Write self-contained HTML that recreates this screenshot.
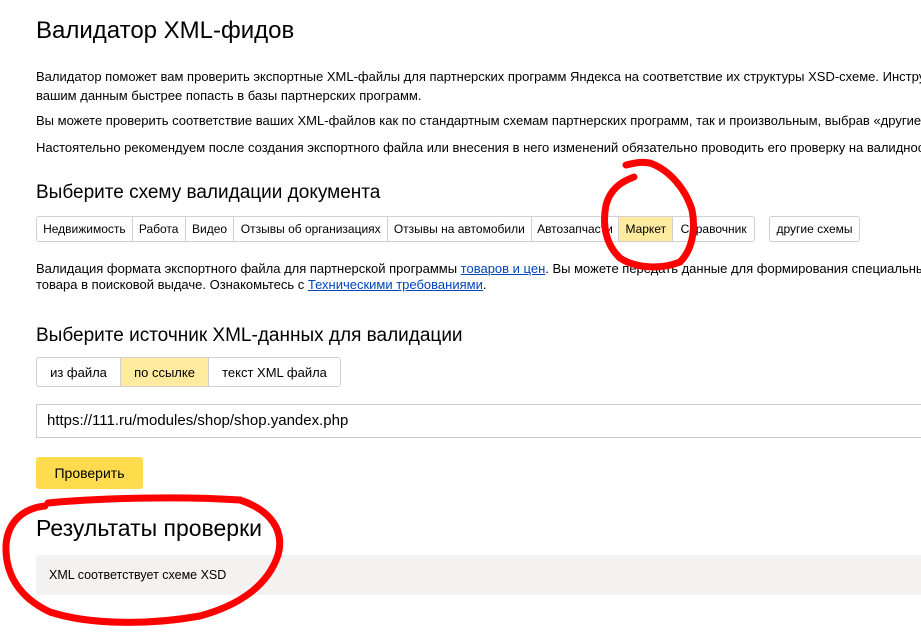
<!DOCTYPE html>
<html><head><meta charset="utf-8"><style>
body{margin:0;width:921px;height:634px;overflow:hidden;background:#fff;font-family:"Liberation Sans",Arial,sans-serif;color:#000;position:relative}
.a{position:absolute;white-space:nowrap}
.p{font-size:13px;line-height:16px}
.h{font-size:19px}
.tabs{position:absolute;display:flex;border:1px solid #d0d0d0;border-radius:3px;font-size:12px;box-sizing:border-box;overflow:hidden}
.tabs div{border-right:1px solid #d0d0d0;display:flex;align-items:center;justify-content:center;box-sizing:border-box}
.tabs div:last-child{border-right:none}
.sel{background:#ffeba0}
a{color:#04b;text-decoration:underline}
</style></head><body>
<div class="a" style="left:36px;top:17px;font-size:24px">Валидатор XML-фидов</div>
<div class="a p" style="left:36px;top:69px">Валидатор поможет вам проверить экспортные XML-файлы для партнерских программ Яндекса на соответствие их структуры XSD-схеме. Инструмент поможет</div>
<div class="a p" style="left:36px;top:88px">вашим данным быстрее попасть в базы партнерских программ.</div>
<div class="a p" style="left:36px;top:113px">Вы можете проверить соответствие ваших XML-файлов как по стандартным схемам партнерских программ, так и произвольным, выбрав «другие схемы».</div>
<div class="a p" style="left:36px;top:140px">Настоятельно рекомендуем после создания экспортного файла или внесения в него изменений обязательно проводить его проверку на валидность.</div>
<div class="a h" style="left:36px;top:182px">Выберите схему валидации документа</div>
<div class="tabs" style="left:36px;top:216px;height:26px;width:719px">
<div style="width:96px">Недвижимость</div><div style="width:53px">Работа</div><div style="width:49px">Видео</div><div style="width:154px">Отзывы об организациях</div><div style="width:144px">Отзывы на автомобили</div><div style="width:88px">Автозапчасти</div><div class="sel" style="width:54px">Маркет</div><div style="width:81px">Справочник</div></div>
<div class="tabs" style="left:769px;top:216px;height:26px;width:91px"><div style="width:89px">другие схемы</div></div>
<div class="a p" style="left:36px;top:261px">Валидация формата экспортного файла для партнерской программы <a>товаров и цен</a>. Вы можете передать данные для формирования специальных</div>
<div class="a p" style="left:36px;top:277px">товара в поисковой выдаче. Ознакомьтесь с <a>Техническими требованиями</a>.</div>
<div class="a h" style="left:36px;top:325px">Выберите источник XML-данных для валидации</div>
<div class="tabs" style="left:36px;top:357px;height:30px;width:305px;font-size:13px"><div style="width:84px">из файла</div><div class="sel" style="width:88px">по ссылке</div><div style="width:131px">текст XML файла</div></div>
<div class="a" style="left:36px;top:404px;width:900px;height:34px;border:1px solid #ccc;box-sizing:border-box;font-size:15px;line-height:32px;padding-left:10px">https://111.ru/modules/shop/shop.yandex.php</div>
<div class="a" style="left:36px;top:457px;width:107px;height:32px;background:#ffdb4d;border-radius:3px;font-size:14px;line-height:32px;text-align:center">Проверить</div>
<div class="a" style="left:36px;top:515px;font-size:23px">Результаты проверки</div>
<div class="a" style="left:36px;top:555px;width:900px;height:40px;background:#f3f2f1;border-radius:3px;font-size:12.5px;line-height:40px;padding-left:13px;box-sizing:border-box">XML соответствует схеме XSD</div>
<svg class="a" style="left:0;top:0" width="921" height="634"><g fill="none" stroke="#f00" stroke-width="7" stroke-linecap="round" stroke-linejoin="round">
<path d="M634 177 C620 182 610 190 606 205 C602 225 606 245 620 258 C635 268 660 270 680 262 C692 250 696 230 692 210 C686 190 670 170 650 163 C642 162 638 162 626 165"/>
<path d="M48 503 C100 498 180 496 240 500 C270 510 285 530 278 555 C268 585 240 605 200 616 C150 625 90 625 50 612 C20 598 5 575 6 545 C8 520 25 508 45 506"/>
</g></svg>
</body></html>
